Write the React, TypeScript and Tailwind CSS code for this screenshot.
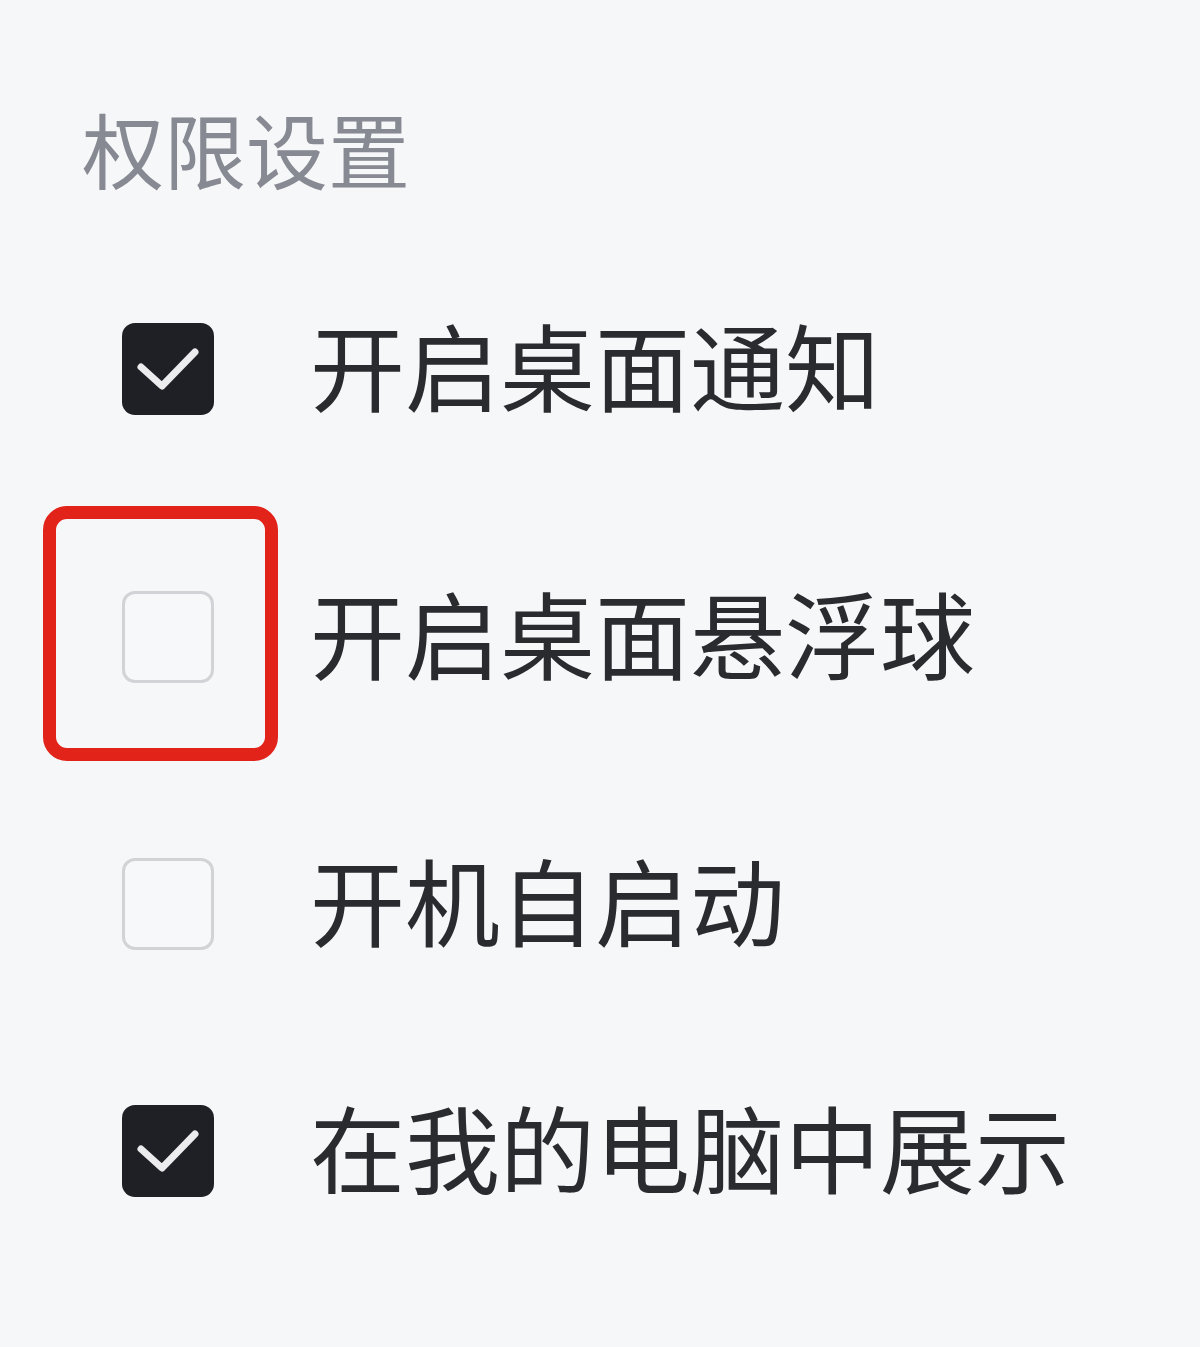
import React from 'react';

type Item = { label: string; checked: boolean; highlight?: boolean; mt: string };

const items: Item[] = [
  { label: '开启桌面通知', checked: true, mt: 'mt-[120px]' },
  { label: '开启桌面悬浮球', checked: false, highlight: true, mt: 'mt-[148px]' },
  { label: '开机自启动', checked: false, mt: 'mt-[147px]' },
  { label: '在我的电脑中展示', checked: true, mt: 'mt-[127px]' },
];

function Check({ checked, highlight }: { checked: boolean; highlight?: boolean }) {
  return (
    <div className="relative w-[92px] h-[92px] shrink-0">
      {checked ? (
        <div className="w-full h-full rounded-[13px] bg-[#1f2025] flex items-center justify-center">
          <svg width="92" height="92" viewBox="0 0 92 92" fill="none">
            <path d="M19 44 L40 63 L73 29" stroke="#ececee" strokeWidth="7" strokeLinecap="round" strokeLinejoin="round" />
          </svg>
        </div>
      ) : (
        <div className="w-full h-full rounded-[13px] border-[3px] border-[#d1d3d7] bg-[#f7f8fa]" />
      )}
      {highlight && (
        <div className="absolute -left-[79px] -top-[85px] w-[235px] h-[255px] rounded-[24px] border-[13px] border-[#e2231a]" />
      )}
    </div>
  );
}

export default function App() {
  return (
    <div
      className="w-[1200px] h-[1347px] bg-[#f6f7f9] pt-[107px] pl-[82px] overflow-hidden"
      style={{ fontFamily: '"Noto Sans CJK SC", "Noto Sans", sans-serif' }}
    >
      <div className="text-[82px] leading-[82px] text-[#878a92]">权限设置</div>
      {items.map((it) => (
        <div key={it.label} className={`${it.mt} h-[120px] flex items-center pl-[40px] gap-[96px]`}>
          <Check checked={it.checked} highlight={it.highlight} />
          <span className="-mt-[10px] text-[95px] leading-[120px] text-[#2a2b2f] whitespace-nowrap">{it.label}</span>
        </div>
      ))}
    </div>
  );
}
